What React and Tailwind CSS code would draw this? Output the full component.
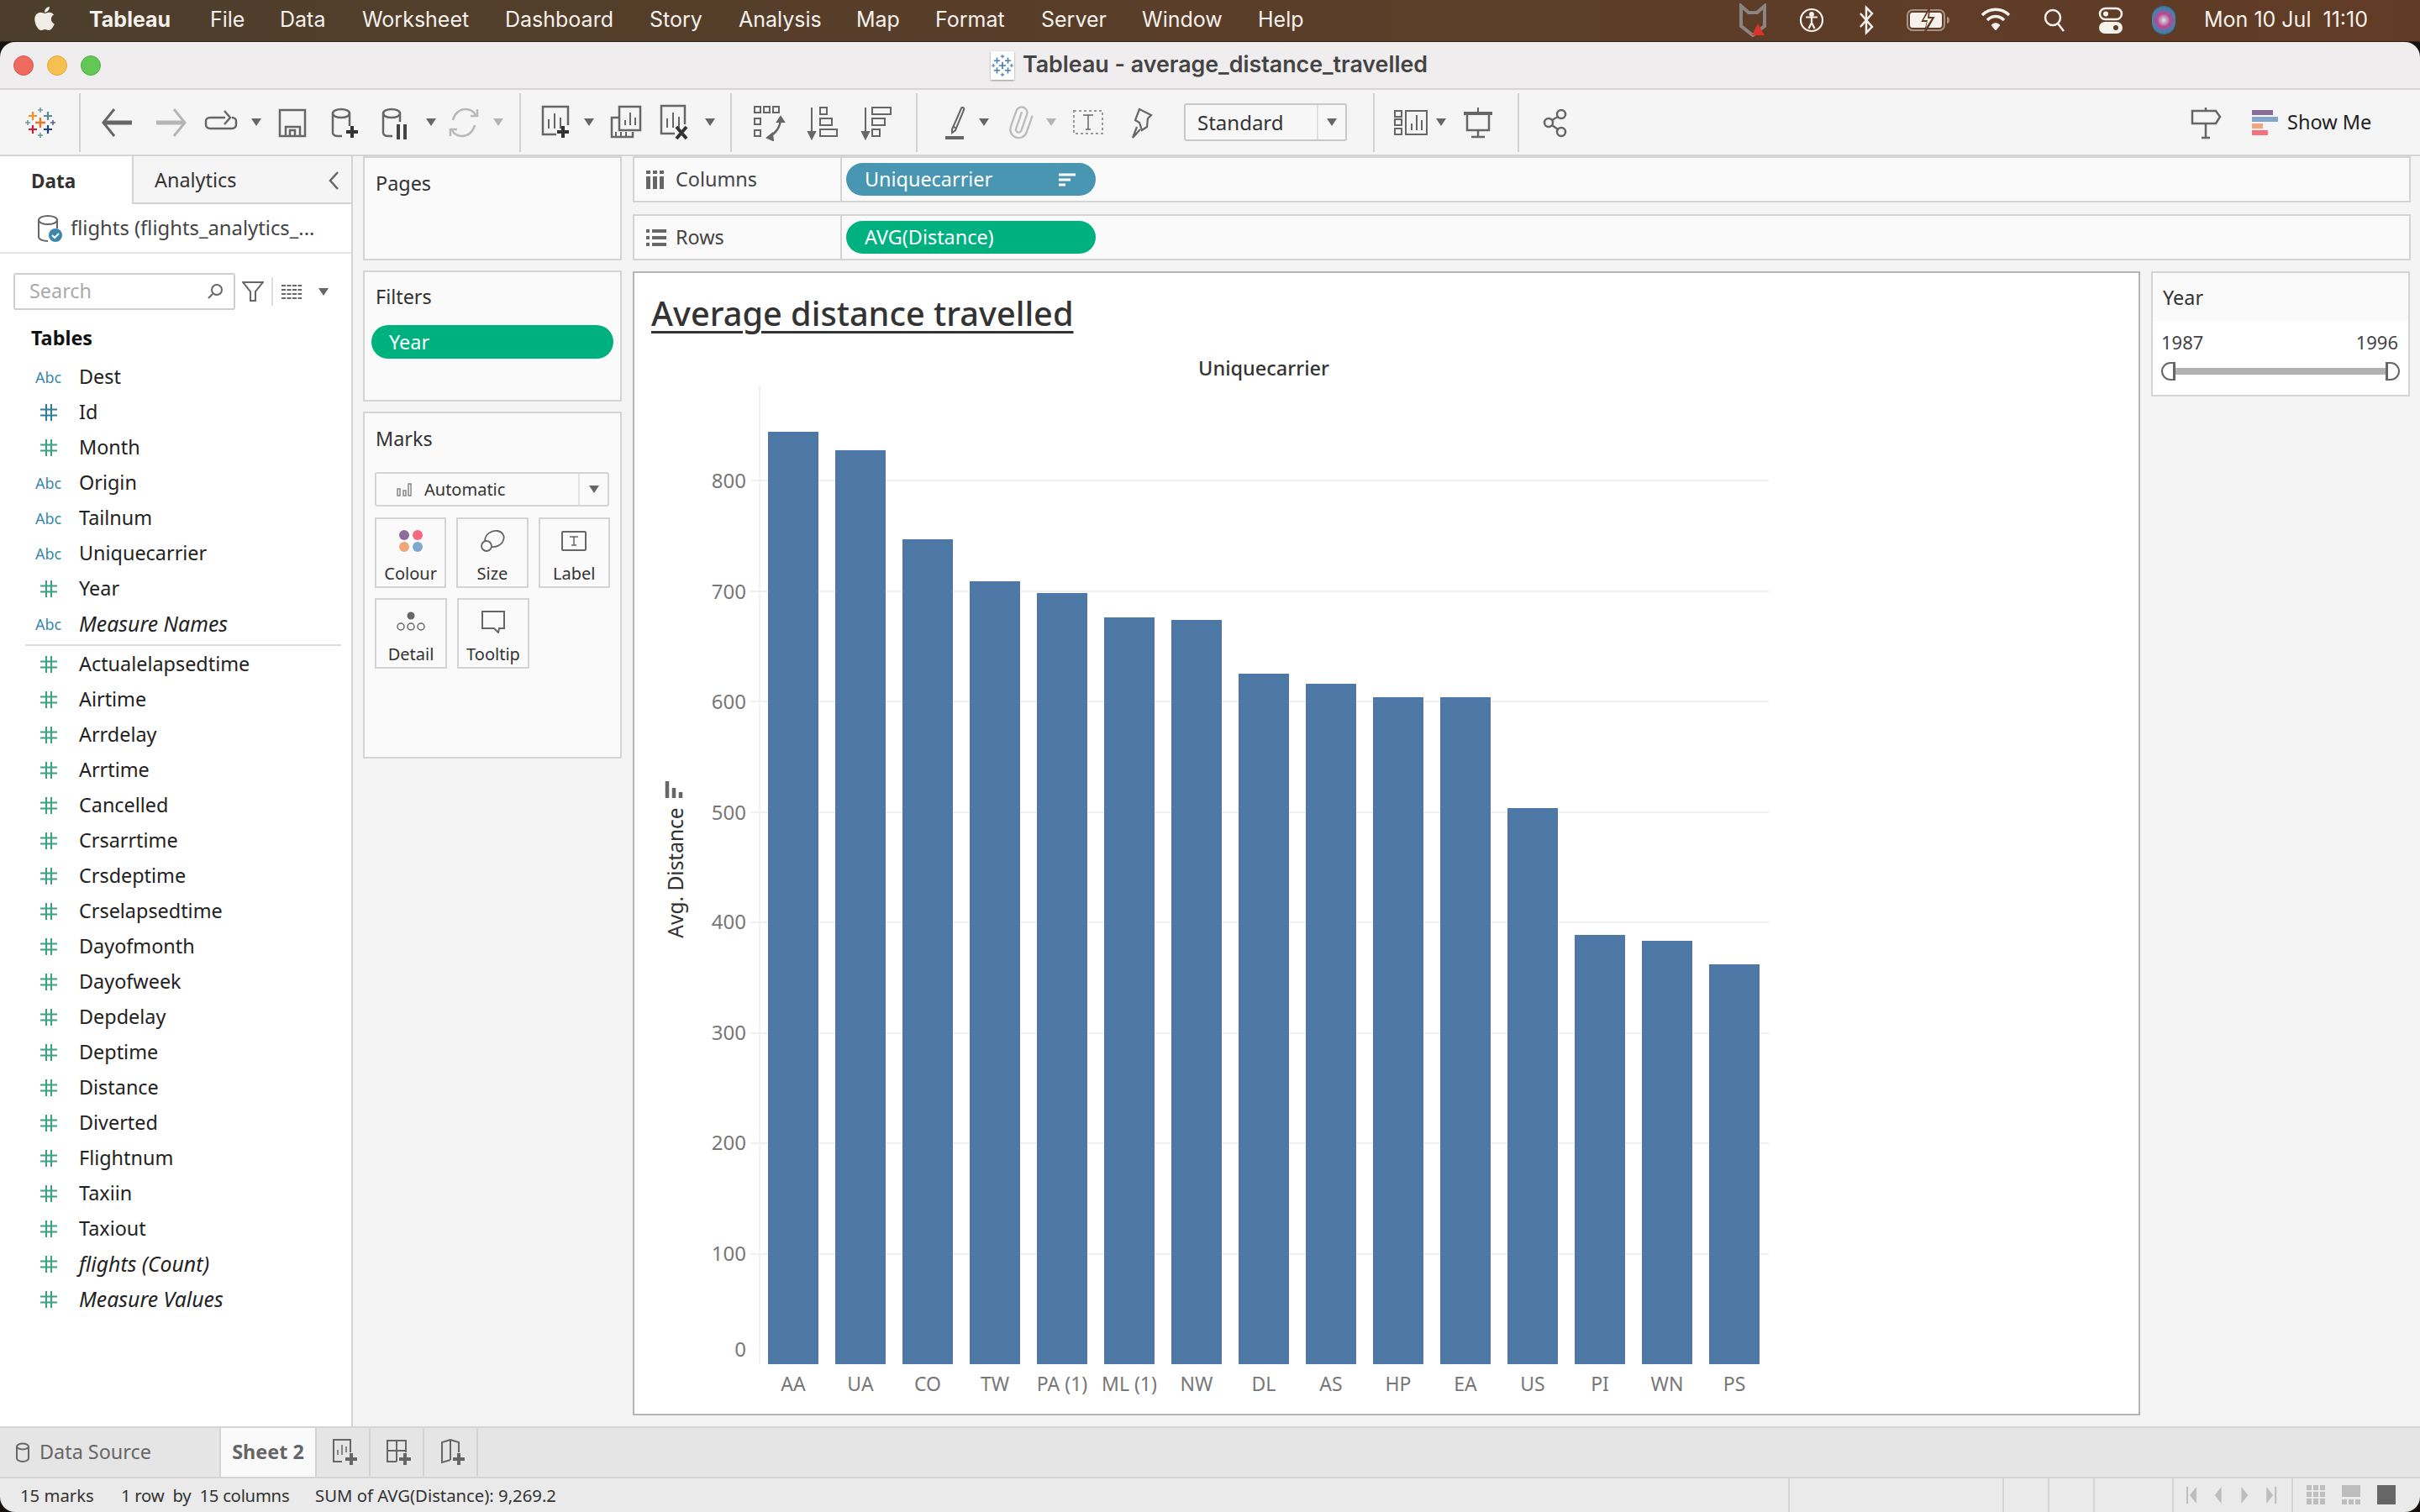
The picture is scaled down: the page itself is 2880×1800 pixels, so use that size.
import { Paperclip } from 'lucide-react';
import { FaApple } from 'react-icons/fa';

const font = 'font-["Noto_Sans",sans-serif]';

const tablesA = [
  ['abc', 'Dest'], ['idn', 'Id'], ['num', 'Month'], ['abc', 'Origin'], ['abc', 'Tailnum'],
  ['abc', 'Uniquecarrier'], ['num', 'Year'], ['abc', 'Measure Names', true],
];
const tablesB = [
  'Actualelapsedtime', 'Airtime', 'Arrdelay', 'Arrtime', 'Cancelled', 'Crsarrtime', 'Crsdeptime',
  'Crselapsedtime', 'Dayofmonth', 'Dayofweek', 'Depdelay', 'Deptime', 'Distance', 'Diverted',
  'Flightnum', 'Taxiin', 'Taxiout',
];

const bars = [
  ['AA', 514], ['UA', 536], ['CO', 642], ['TW', 692], ['PA (1)', 706], ['ML (1)', 735], ['NW', 738],
  ['DL', 802], ['AS', 814], ['HP', 830], ['EA', 830], ['US', 962], ['PI', 1113], ['WN', 1120], ['PS', 1148],
];
const ticks = [[800, 572, 573], [700, 704, 705], [600, 835, 836], [500, 967, 968], [400, 1098, 1098], [300, 1230, 1230], [200, 1361, 1361], [100, 1493, 1493], [0, 1624, 1607]];

function Ico({ w = 40, children, stroke = '#666', sw = 2.5, className = '' }) {
  return (
    <svg width={w} height="44" viewBox={`0 0 ${w} 44`} fill="none" stroke={stroke} strokeWidth={sw} className={`shrink-0 ${className}`}>
      {children}
    </svg>
  );
}

function Caret({ className = '', light }) {
  return <div className={`w-[12px] h-0 border-x-[6px] border-x-transparent border-t-[9px] shrink-0 ${light ? 'border-t-[#b5b5b5]' : 'border-t-[#666]'} ${className}`} />;
}

function Sep({ className = '' }) {
  return <div className={`w-[2px] h-[70px] bg-[#d2d2d2] shrink-0 ${className}`} />;
}

function Plus({ x, y, s = 7, color = '#333' }) {
  return <path d={`M${x} ${y - s}v${s * 2}M${x - s} ${y}h${s * 2}`} stroke={color} strokeWidth="4" />;
}

function Hash({ color }) {
  return (
    <svg width="20" height="20" viewBox="0 0 20 20" stroke={color} strokeWidth="2">
      <path d="M7 0v20M13 0v20M0 6.500h20M0 13.500h20" />
    </svg>
  );
}

function TableauLogo({ size = 36, mono }) {
  const c = (x) => (mono ? '#4e7fae' : x);
  const cross = (x, y, s, col, sw) => <path d={`M${x} ${y - s}v${s * 2}M${x - s} ${y}h${s * 2}`} stroke={c(col)} strokeWidth={sw} />;
  return (
    <svg width={size} height={size} viewBox="0 0 36 36" fill="none">
      {cross(18, 18, 6, '#e8762b', 2.4)}
      {cross(9, 10, 5, '#f28e2b', 2.2)}
      {cross(27, 10, 5, '#5b879b', 2.2)}
      {cross(9, 26, 5, '#c72035', 2.2)}
      {cross(27, 26, 5, '#1f447e', 2.2)}
      {cross(18, 3, 3, '#7099a6', 1.6)}
      {cross(18, 33, 3, '#7099a6', 1.6)}
      {cross(3, 18, 3, '#7099a6', 1.6)}
      {cross(33, 18, 3, '#5b6591', 1.6)}
    </svg>
  );
}

function MenuBar() {
  const items = [
    ['File', 'w-[83px]'], ['Data', 'w-[98px]'], ['Worksheet', 'w-[170px]'], ['Dashboard', 'w-[172px]'],
    ['Story', 'w-[106px]'], ['Analysis', 'w-[140px]'], ['Map', 'w-[94px]'], ['Format', 'w-[126px]'],
    ['Server', 'w-[120px]'], ['Window', 'w-[138px]'], ['Help', 'w-[60px]'],
  ];
  return (
    <div className='h-[50px] shrink-0 flex items-center border-b border-[#2a2018] bg-gradient-to-r from-[#4d3e2c] via-[#5a3e29] to-[#613b26] text-[#f5f1ec] font-["Inter",sans-serif] text-[25px] pb-[2px]'>
      <FaApple className="ml-[38px] w-[30px] h-[32px] text-[#f0ece6] -mt-[4px]" />
      <span className="ml-[38px] w-[144px] font-bold">Tableau</span>
      {items.map(([t, w]) => (
        <span key={t} className={w}>{t}</span>
      ))}
      <div className="ml-auto flex items-center">
        {/* shield */}
        <svg width="34" height="40" viewBox="0 0 34 40">
          <path d="M3 3l9 8h10l9-8v24l-14 11-14-11z" fill="none" stroke="#8a8580" strokeWidth="4" />
          <path d="M23 24l8 14h-15z" fill="#d9352c" />
        </svg>
        <svg className="ml-[38px]" width="30" height="32" viewBox="0 0 30 32" fill="none" stroke="#f5f1ec" strokeWidth="2.2">
          <circle cx="15" cy="16" r="13" />
          <circle cx="15" cy="9" r="1.800" fill="#f5f1ec" />
          <path d="M8 12.500h14M15 13v6M15 19l-3.500 7M15 19l3.500 7" />
        </svg>
        <svg className="ml-[40px]" width="20" height="36" viewBox="0 0 20 36" fill="none" stroke="#f5f1ec" strokeWidth="2.500">
          <path d="M3 10l14 16-7 7V3l7 7L3 26" />
        </svg>
        <svg className="ml-[38px]" width="52" height="28" viewBox="0 0 52 28">
          <rect x="1" y="2" width="44" height="24" rx="6" fill="none" stroke="#a79383" strokeWidth="2" />
          <rect x="4" y="5" width="38" height="18" rx="3" fill="#f5f1ec" />
          <path d="M48 10v8c2 0 3-2 3-4s-1-4-3-4z" fill="#a79383" />
          <path d="M27 0l-8 15h6l-3 13 10-17h-6z" fill="#613b26" stroke="#613b26" strokeWidth="2" />
          <path d="M26 4l-6 10h5l-2 9 7-11h-5z" fill="#f5f1ec" />
        </svg>
        <svg className="ml-[36px]" width="36" height="32" viewBox="0 0 36 32" fill="none" stroke="#f5f1ec" strokeWidth="3.500">
          <path d="M2 10c9-9 23-9 32 0M8 16c6-6 14-6 20 0" />
          <path d="M18 28l-5-6c3-3 7-3 10 0z" fill="#f5f1ec" strokeWidth="1" />
        </svg>
        <svg className="ml-[39px]" width="26" height="30" viewBox="0 0 26 30" fill="none" stroke="#f5f1ec" strokeWidth="2.500">
          <circle cx="11" cy="12" r="9" />
          <path d="M17 19l7 9" />
        </svg>
        <svg className="ml-[39px]" width="30" height="32" viewBox="0 0 30 32">
          <rect x="2" y="2" width="26" height="13" rx="6.500" fill="none" stroke="#f5f1ec" strokeWidth="2.500" />
          <circle cx="9" cy="8.500" r="3" fill="#f5f1ec" />
          <rect x="1" y="18" width="28" height="14" rx="7" fill="#f5f1ec" />
          <circle cx="21" cy="25" r="3" fill="#613b26" />
        </svg>
        <div className="ml-[34px] w-[28px] h-[34px] rounded-full bg-[radial-gradient(circle,#c8d8e0_5%,#c0468f_35%,#3a86b0_65%,#3c3a55_100%)]" />
        <span className="ml-[34px] mr-[38px] w-[219px] whitespace-pre">Mon 10 Jul  11:10</span>
      </div>
    </div>
  );
}

function TitleBar() {
  return (
    <div className="h-[57px] shrink-0 flex items-center bg-[#efedee] border-b-2 border-[#d4d4d4] relative">
      <div className="flex gap-[16px] ml-[16px]">
        <div className="w-[24px] h-[24px] rounded-full bg-[#ef6a5f] border border-[#d95b50]" />
        <div className="w-[24px] h-[24px] rounded-full bg-[#f6bf50] border border-[#dfa73f]" />
        <div className="w-[24px] h-[24px] rounded-full bg-[#62c755] border border-[#53ad47]" />
      </div>
      <div className="absolute left-[1179px] top-[8px] flex items-center">
        <div className="w-[28px] h-[34px] mt-[2px] bg-white shadow-[0_1px_2px_rgba(0,0,0,0.4)] flex items-center justify-center">
          <TableauLogo size={26} mono />
        </div>
        <span className='ml-[10px] -mt-[2px] font-["Inter",sans-serif] font-semibold text-[26.800px] text-[#444] whitespace-nowrap'>Tableau - average_distance_travelled</span>
      </div>
    </div>
  );
}

function Toolbar() {
  return (
    <div className="h-[79px] shrink-0 flex items-center bg-[#f5f5f5] border-b-2 border-[#d4d4d4]">
      <div className="ml-[30px] shrink-0"><TableauLogo /></div>
      <Sep className="ml-[28px]" />
      <Ico className="ml-[23px]" sw={3}><path d="M17 6L4 22l13 16" /><path d="M4 22h34" strokeWidth="5" /></Ico>
      <Ico className="ml-[25px]" stroke="#b5b5b5" sw={3}><path d="M23 6l13 16-13 16" /><path d="M36 22H2" strokeWidth="5" /></Ico>
      <Ico w={44} className="ml-[17px]">
        <path d="M27 16H9c-3 0-5 2-5 4v4c0 3 2 5 5 5h26c3 0 5-2 5-5v-4c0-2-2-4-5-4" />
        <path d="M26 8l7 8-7 8" />
      </Ico>
      <Caret className="ml-[14px]" />
      <Ico className="ml-[17px]" sw={2.500}>
        <rect x="5" y="7" width="30" height="31" />
        <path d="M12 38V27h17v11M17 38v-7h6v7" />
      </Ico>
      <Ico className="ml-[23px]">
        <ellipse cx="15" cy="11" rx="10" ry="5" />
        <path d="M5 11v23c0 2 2 4 6 4h5M25 11v15" />
        <Plus x={28} y={33} />
      </Ico>
      <Ico className="ml-[20px]">
        <ellipse cx="15" cy="11" rx="10" ry="5" />
        <path d="M5 11v23c0 2 2 4 6 4h5M25 11v10" />
        <path d="M23 24v18M31 24v18" stroke="#444" strokeWidth="4" />
      </Ico>
      <Caret className="ml-[16px]" />
      <Ico className="ml-[13px]" stroke="#b8b8b8">
        <path d="M7 19c2-8 8-13 15-13 6 0 10 3 12 7M33 25c-2 8-8 13-15 13-6 0-10-3-12-7" />
        <path d="M28 14h8v-8M12 30H4v8" />
      </Ico>
      <Caret className="ml-[15px]" light />
      <Sep className="ml-[19px]" />
      <Ico className="ml-[20px]">
        <path d="M22 36H6V3h30v22" />
        <path d="M13 29V18M20 29V11M27 29V16" strokeWidth="2" />
        <Plus x={30} y={33} />
      </Ico>
      <Caret className="ml-[15px]" />
      <Ico className="ml-[18px]">
        <path d="M12 16H3v23h25v-6" />
        <rect x="12" y="3" width="25" height="28" fill="#f5f5f5" />
        <path d="M19 25v-6M25 25V10M31 25v-9M8 33v6M14 33v6M20 33v6" strokeWidth="2" />
      </Ico>
      <Ico className="ml-[18px]">
        <path d="M20 35H4V2h28v22" />
        <path d="M11 28V17M18 28V10M25 28V15" strokeWidth="2" />
        <path d="M22 27l12 14M34 27L22 41" stroke="#333" strokeWidth="4" />
      </Ico>
      <Caret className="ml-[16px]" />
      <Sep className="ml-[18px]" />
      <Ico className="ml-[24px]" sw={2}>
        <rect x="3" y="3" width="7" height="7" /><rect x="14" y="3" width="7" height="7" /><rect x="25" y="3" width="7" height="7" />
        <rect x="3" y="17" width="7" height="7" /><rect x="3" y="31" width="7" height="7" />
        <path d="M34 17c0 10-6 18-14 22" strokeWidth="2.500" />
        <path d="M30 21l4-6 4 6z" fill="#666" /><path d="M24 35l-6 5 7 3z" fill="#666" />
      </Ico>
      <Ico className="ml-[24px]" sw={2}>
        <path d="M7 4v32" /><path d="M3 33l4 8 4-8z" fill="#666" />
        <rect x="17" y="4" width="8" height="8" /><rect x="17" y="17" width="14" height="8" /><rect x="17" y="30" width="20" height="8" />
      </Ico>
      <Ico className="ml-[24px]" sw={2}>
        <path d="M7 4v32" /><path d="M3 33l4 8 4-8z" fill="#666" />
        <rect x="15" y="4" width="22" height="8" /><rect x="15" y="17" width="15" height="8" /><rect x="15" y="30" width="9" height="8" />
      </Ico>
      <Sep className="ml-[27px]" />
      <Ico className="ml-[23px]" sw={2}>
        <path d="M18 30l11-25c1-2 4-1 3 2L22 31l-4 3z" />
        <path d="M19 26l4 3" />
        <path d="M10 40h22" strokeWidth="4" />
      </Ico>
      <Caret className="ml-[10px]" />
      <div className="ml-[17px] w-[40px] h-[44px] flex items-center justify-center shrink-0">
        <Paperclip size={40} color="#bbb" strokeWidth={1.400} className="-rotate-[25deg]" />
      </div>
      <Caret className="ml-[11px]" light />
      <Ico className="ml-[18px]" sw={1.500}>
        <rect x="3" y="8" width="34" height="27" stroke="#999" strokeWidth="2" strokeDasharray="3 3" />
        <path d="M14 13h12M20 13v17M17 30h6" />
      </Ico>
      <Ico className="ml-[24px]" sw={2.200}>
        <path d="M17 6l14 7-4 4-1 10-6 4-3-9-5-3zM14 27L9 40l9-10" />
      </Ico>
      <div className={`ml-[30px] w-[194px] h-[45px] shrink-0 flex items-center border-2 border-[#c8c8c8] rounded-[3px] bg-[#f7f7f7] ${font} text-[24px] text-[#333]`}>
        <span className="pl-[14px] w-[156px]">Standard</span>
        <div className="h-full border-l-2 border-[#e0e0e0] flex-1 flex items-center justify-center"><Caret /></div>
      </div>
      <Sep className="ml-[31px]" />
      <Ico className="ml-[23px]" sw={2}>
        <rect x="1" y="8" width="8" height="7" /><rect x="1" y="18" width="8" height="7" /><rect x="1" y="29" width="8" height="7" />
        <rect x="14" y="8" width="25" height="28" />
        <path d="M21 31V23M27 31V13M33 31V19" />
      </Ico>
      <Caret className="ml-[10px]" />
      <Ico className="ml-[18px]" sw={2.500}>
        <path d="M20 4v6" strokeWidth="2" />
        <path d="M3 11h34" strokeWidth="4" />
        <path d="M7 12v19h26V12M20 31v8M12 39h16" />
      </Ico>
      <Sep className="ml-[27px]" />
      <Ico className="ml-[23px]" sw={2.500}>
        <circle cx="27" cy="12" r="5" /><circle cx="27" cy="33" r="5" /><circle cx="12" cy="22" r="5" />
        <path d="M16 19l7-4M16 25l7 5" />
      </Ico>
      <Ico className="ml-auto" sw={2.500}>
        <path d="M20 4v4M20 23v17M15 40h10" />
        <path d="M4 8h28l5 7-5 8H4z" />
      </Ico>
      <div className="ml-[35px] w-[31px] shrink-0 flex flex-col gap-[2px]">
        <div className="w-[25px] h-[6px] bg-[#8a6d9c]" />
        <div className="w-[31px] h-[6px] bg-[#82a6cd]" />
        <div className="w-[13px] h-[6px] bg-[#f2a67c]" />
        <div className="w-[19px] h-[6px] bg-[#f7707f]" />
      </div>
      <span className={`ml-[11px] mr-[58px] w-[100px] ${font} text-[23.500px] text-[#222] whitespace-nowrap`}>Show Me</span>
    </div>
  );
}

function Field({ type, name, italic }) {
  return (
    <div className="h-[42px] flex items-center">
      <div className="w-[94px] shrink-0">
        {type === 'abc' && <span className="pl-[42px] text-[18px] text-[#3a88ab]">Abc</span>}
        {type === 'num' && <div className="pl-[48px]"><Hash color="#3ba27e" /></div>}
        {type === 'idn' && <div className="pl-[48px]"><Hash color="#2f7d9e" /></div>}
      </div>
      <span className={`text-[#222] ${italic ? 'italic text-[24.800px]' : 'text-[23.400px]'}`}>{name}</span>
    </div>
  );
}

function Sidebar() {
  return (
    <div className={`w-[420px] shrink-0 bg-white border-r-2 border-[#d4d4d4] flex flex-col ${font}`}>
      <div className="h-[57px] flex shrink-0">
        <div className="w-[157px] pl-[37px] pt-[2px] text-[22.500px] font-bold text-[#333] flex items-center">Data</div>
        <div className="flex-1 flex items-center pl-[25px] pt-[2px] bg-[#f5f5f5] border-l-2 border-b-2 border-[#d4d4d4] text-[23.400px] text-[#333]">
          Analytics
          <svg className="ml-auto mr-[14px]" width="14" height="24" viewBox="0 0 14 24" fill="none" stroke="#666" strokeWidth="2.500"><path d="M12 2L3 12l9 10" /></svg>
        </div>
      </div>
      <div className="h-[59px] flex items-center border-b-2 border-[#e3e3e3] shrink-0">
        <svg className="ml-[44px]" width="30" height="34" viewBox="0 0 30 34" fill="none" stroke="#666" strokeWidth="2">
          <ellipse cx="13" cy="7" rx="11" ry="5" />
          <path d="M2 7v20c0 3 5 5 11 5M24 7v10" />
          <circle cx="22" cy="25" r="8" fill="#3a88ab" stroke="none" />
          <path d="M18 25l3 3 5-5" stroke="#fff" />
        </svg>
        <span className="ml-[10px] text-[23.800px] text-[#444] whitespace-nowrap">flights (flights_analytics_...</span>
      </div>
      <div className="flex items-center mt-[23px] ml-[16px] shrink-0">
        <div className="w-[264px] h-[44px] border-2 border-[#cfcfcf] rounded-[3px] flex items-center pl-[17px] text-[23.400px] text-[#aaa]">
          Search
          <svg className="ml-auto mr-[12px]" width="20" height="20" viewBox="0 0 20 20" fill="none" stroke="#666" strokeWidth="2"><circle cx="12" cy="8" r="6" /><path d="M7 13l-5 5" /></svg>
        </div>
        <svg className="ml-[8px]" width="26" height="26" viewBox="0 0 26 26" fill="none" stroke="#666" strokeWidth="2"><path d="M1 2h24l-9 11v11h-6V13z" /></svg>
        <div className="ml-[9px] w-[2px] h-[34px] bg-[#ddd]" />
        <svg className="ml-[10px]" width="24" height="18" viewBox="0 0 24 18" stroke="#666" strokeWidth="2"><path d="M0 2h24M0 7h24M0 12h24M0 17h24" strokeDasharray="5 1.500" /></svg>
        <Caret className="ml-[20px]" />
      </div>
      <div className="mt-[16px] pl-[37px] text-[23.400px] font-bold text-[#111] leading-[34px]">Tables</div>
      <div className="mt-[9px]">
        {tablesA.map(([t, n, i]) => <Field key={n} type={t} name={n} italic={i} />)}
      </div>
      <div className="ml-[30px] mr-[12px] h-[2px] bg-[#ddd] mt-[3px]" />
      <div className="mt-[1px]">
        {tablesB.map((n) => <Field key={n} type="num" name={n} />)}
        <Field type="num" name="flights (Count)" italic />
        <Field type="num" name="Measure Values" italic />
      </div>
    </div>
  );
}

function Card({ label, children }) {
  return (
    <div className="w-[86px] h-[84px] border-2 border-[#d4d4d4] flex flex-col items-center">
      <div className="h-[28px] mt-[12px] flex items-center justify-center">{children}</div>
      <span className="mt-[13px] text-[20px] leading-[24px] text-[#333]">{label}</span>
    </div>
  );
}

function Panels() {
  return (
    <div className={`w-[308px] shrink-0 flex flex-col gap-[12px] ${font} text-[23.400px] text-[#333]`}>
      <div className="h-[124px] bg-[#fafafa] border-2 border-[#d4d4d4] pl-[13px] pt-[13px]">Pages</div>
      <div className="h-[156px] bg-[#fafafa] border-2 border-[#d4d4d4] px-[8px] pt-[12px]">
        <div className="pl-[5px]">Filters</div>
        <div className="mt-[16px] h-[40px] rounded-full bg-[#00b180] text-white flex items-center pl-[21px]">Year</div>
      </div>
      <div className="h-[413px] bg-[#fafafa] border-2 border-[#d4d4d4] px-[12px] pt-[13px]">
        <div className="pl-[1px]">Marks</div>
        <div className="mt-[22px] w-[279px] h-[41px] border-2 border-[#d4d4d4] rounded-[3px] flex items-center text-[20px]">
          <svg className="ml-[24px]" width="18" height="16" viewBox="0 0 18 16" fill="none" stroke="#888" strokeWidth="1.500"><rect x="1" y="7" width="3" height="8" /><rect x="8" y="9" width="3" height="6" /><rect x="14" y="1" width="3" height="14" /></svg>
          <span className="ml-[15px]">Automatic</span>
          <div className="ml-auto w-[35px] h-full border-l-2 border-[#e3e3e3] flex items-center justify-center"><Caret /></div>
        </div>
        <div className="mt-[13px] flex gap-[12px]">
          <Card label="Colour">
            <svg width="30" height="28" viewBox="0 0 30 28">
              <circle cx="7" cy="7" r="6" fill="#8a6d9c" /><circle cx="23" cy="7" r="6" fill="#f5687d" />
              <circle cx="7" cy="21" r="6" fill="#f0a678" /><circle cx="23" cy="21" r="6" fill="#7fa7d0" />
            </svg>
          </Card>
          <Card label="Size">
            <svg width="30" height="28" viewBox="0 0 30 28" fill="none" stroke="#666" strokeWidth="1.800">
              <path d="M6 14C6 6 14 1 21 2c6 1 9 6 7 11-2 6-9 9-15 8" />
              <circle cx="8" cy="20" r="6" />
            </svg>
          </Card>
          <Card label="Label">
            <svg width="30" height="28" viewBox="0 0 30 28" fill="none" stroke="#666" strokeWidth="2">
              <rect x="1" y="3" width="28" height="22" rx="1" />
              <path d="M10 9h10M15 9v10M12 19h6" strokeWidth="1.500" />
            </svg>
          </Card>
        </div>
        <div className="mt-[12px] flex gap-[12px]">
          <Card label="Detail">
            <svg width="34" height="26" viewBox="0 0 34 26" fill="none" stroke="#666" strokeWidth="1.500">
              <circle cx="17" cy="6" r="4.500" fill="#666" stroke="none" />
              <circle cx="5" cy="19" r="4" /><circle cx="17" cy="19" r="4" /><circle cx="29" cy="19" r="4" />
            </svg>
          </Card>
          <Card label="Tooltip">
            <svg width="30" height="28" viewBox="0 0 30 28" fill="none" stroke="#666" strokeWidth="2"><path d="M2 2h26v20h-6l-1 5-5-5H2z" /></svg>
          </Card>
        </div>
      </div>
    </div>
  );
}

function Shelf({ icon, label, pill, pillCls, sort }) {
  return (
    <div className={`h-[55px] bg-[#fafafa] border-2 border-[#d4d4d4] flex items-center ${font} text-[23.400px] text-[#444]`}>
      <div className="w-[247px] h-full flex items-center border-r-2 border-[#d4d4d4] pl-[14px]">
        <div className="w-[35px]">{icon}</div>
        {label}
      </div>
      <div className={`ml-[5px] w-[297px] h-[39px] rounded-full flex items-center pl-[22px] text-white ${pillCls}`}>
        {pill}
        {sort && (
          <svg className="ml-auto mr-[24px]" width="20" height="18" viewBox="0 0 20 18" stroke="#fff" strokeWidth="3"><path d="M0 3h20M0 9h14M0 15h8" /></svg>
        )}
      </div>
    </div>
  );
}

function Chart() {
  return (
    <svg width="1790" height="1263" viewBox="755 420 1790 1263" className="block" fontFamily="'Noto Sans',sans-serif">
      <text x="1504" y="447" textAnchor="middle" fontSize="23.500" fontWeight="500" fill="#333">Uniquecarrier</text>
      <path d="M904 458V1624" stroke="#f3f3f3" strokeWidth="2" />
      {ticks.slice(0, -1).map(([, y]) => (
        <path key={y} d={`M893 ${y}H2105`} stroke="#f0f0f0" strokeWidth="2" />
      ))}
      {bars.map(([l, top], i) => (
        <g key={l}>
          <rect x={914 + 80 * i} y={top} width="60" height={1624 - top} fill="#4e79a7" />
          <text x={944 + 80 * i} y="1656" textAnchor="middle" fontSize="23" fill="#777">{l}</text>
        </g>
      ))}
      {ticks.map(([v, , ly]) => (
        <text key={v} x="888" y={ly + 8} textAnchor="end" fontSize="24" fill="#777">{v}</text>
      ))}
      <text transform="translate(813 1039) rotate(-90)" textAnchor="middle" fontSize="24.500" fill="#333">Avg. Distance</text>
      <path d="M794 950v-20M802 950v-12M810 950v-7" stroke="#666" strokeWidth="4.500" />
    </svg>
  );
}

function YearCard() {
  return (
    <div className={`w-[308px] h-[149px] bg-white border-2 border-[#d4d4d4] shrink-0 ${font}`}>
      <div className="h-[57px] bg-[#fafafa] flex items-center pl-[12px] pt-[2px] text-[23.400px] text-[#333]">Year</div>
      <div className="flex justify-between pl-[10px] pr-[12px] mt-[10px] text-[22px] leading-[30px] text-[#444]">
        <span>1987</span><span>1996</span>
      </div>
      <div className="mx-[10px] mt-[9px] h-[22px] flex items-center">
        <div className="w-[17px] h-[22px] border-2 border-r-[3px] border-[#666] rounded-l-full bg-white" />
        <div className="flex-1 h-[8px] bg-[#b2b2b2]" />
        <div className="w-[17px] h-[22px] border-2 border-l-[3px] border-[#666] rounded-r-full bg-white" />
      </div>
    </div>
  );
}

function Workspace() {
  return (
    <div className="flex-1 min-w-0 flex flex-col">
      <div className="flex flex-col gap-[14px]">
        <Shelf
          label="Columns"
          pill="Uniquecarrier"
          pillCls="bg-[#4996b2]"
          sort
          icon={<svg width="22" height="22" viewBox="0 0 22 22" fill="#666"><path d="M0 7h5v15H0zM8 7h5v15H8zM16 7h5v15h-5zM0 0h5v4H0zM8 0h5v4H8zM16 0h5v4h-5z" /></svg>}
        />
        <Shelf
          label="Rows"
          pill="AVG(Distance)"
          pillCls="bg-[#00b180]"
          icon={<svg width="24" height="20" viewBox="0 0 24 20" fill="#666"><path d="M0 0h4v4H0zM7 0h17v4H7zM0 8h4v4H0zM7 8h17v4H7zM0 16h4v4H0zM7 16h17v4H7z" /></svg>}
        />
      </div>
      <div className="mt-[13px] flex gap-[13px] flex-1 min-h-0">
        <div className={`w-[1794px] h-[1362px] bg-white border-2 border-[#b4b4b4] shrink-0 ${font}`}>
          <div className="h-[95px] pl-[20px] pt-[23px]">
            <span className="text-[39.700px] leading-[50px] font-medium text-[#333] underline decoration-[3px] underline-offset-[6px] whitespace-nowrap">Average distance travelled</span>
          </div>
          <Chart />
        </div>
        <YearCard />
      </div>
    </div>
  );
}

function SheetTabs() {
  const tabIcon = (extra) => (
    <div className="w-[64px] h-full flex items-center justify-center pl-[5px] border-r-2 border-[#d4d4d4] shrink-0">
      <svg width="34" height="34" viewBox="0 0 34 34" fill="none" stroke="#666" strokeWidth="2">
        {extra}
        <Plus x={24} y={25} s={7} color="#666" />
      </svg>
    </div>
  );
  return (
    <div className={`h-[60px] shrink-0 bg-[#e5e5e5] border-t-2 border-[#d4d4d4] flex ${font}`}>
      <div className="w-[261px] flex items-center pl-[18px] text-[23.400px] text-[#666] shrink-0">
        <svg width="18" height="24" viewBox="0 0 18 24" fill="none" stroke="#666" strokeWidth="2"><ellipse cx="9" cy="5" rx="7" ry="3.500" /><path d="M2 5v14c0 2 3 4 7 4s7-2 7-4V5" /></svg>
        <span className="ml-[11px]">Data Source</span>
      </div>
      <div className="w-[116px] bg-[#fafafa] border-x-2 border-[#d4d4d4] flex items-center justify-center text-[23.400px] font-bold text-[#666] shrink-0">Sheet 2</div>
      {tabIcon(<><path d="M13 28H3V2h20v15" /><path d="M8 20v-6M13 20V8M18 17v-7" strokeWidth="1.500" /></>)}
      {tabIcon(<><path d="M14 28H3V3h22v14M14 3v25M3 15h22" /></>)}
      {tabIcon(<><path d="M14 26L4 29V5l10-3 10 3v12M14 2v24" /></>)}
    </div>
  );
}

function StatusBar() {
  const cell = 'h-full border-l-2 border-[#d4d4d4] shrink-0';
  return (
    <div className={`h-[42px] shrink-0 bg-[#eaeaea] border-t-2 border-[#d4d4d4] flex items-center rounded-b-[18px] overflow-hidden ${font} text-[20.300px] text-[#333]`}>
      <div className="flex-1 flex pl-[24px] whitespace-pre">
        <span className="w-[120px]">15 marks</span>
        <span className="w-[231px] tracking-[-0.250px]">1 row  by  15 columns</span>
        <span>SUM of AVG(Distance): 9,269.2</span>
      </div>
      <div className={`${cell} w-[255px]`} />
      <div className={`${cell} w-[54px]`} />
      <div className={`${cell} w-[54px]`} />
      <div className={`${cell} w-[94px]`} />
      <div className={`${cell} w-[142px] flex items-center`}>
        <svg className="ml-[15px]" width="126" height="24" viewBox="0 0 126 24" fill="#bdbdbd">
          <path d="M0 2h2v20H0zM4 12l8-10v20zM34 12l8-10v20zM66 2l8 10-8 10zM96 2l8 10-8 10zM106 2h2v20h-2z" />
        </svg>
      </div>
      <div className={`${cell} w-[153px] flex items-center`}>
        <svg className="ml-[16px]" width="124" height="24" viewBox="0 0 124 24">
          <g fill="#bdbdbd">
            <path d="M0 0h6v6H0zM8 0h6v6H8zM16 0h6v6h-6zM0 8h6v6H0zM8 8h6v6H8zM16 8h6v6h-6zM0 16h6v7H0zM8 16h6v7H8zM16 16h6v7h-6z" />
            <path d="M42 0h22v14H42zM42 17h6v6h-6zM50 17h6v6h-6zM58 17h6v6h-6z" />
          </g>
          <rect x="84" y="0" width="22" height="23" fill="#666" />
        </svg>
      </div>
    </div>
  );
}

export default function App() {
  return (
    <div className="w-[2880px] h-[1800px] overflow-hidden bg-[#15110e] flex flex-col">
      <MenuBar />
      <div className="flex-1 min-h-0 flex flex-col rounded-t-[18px] overflow-hidden">
        <TitleBar />
        <Toolbar />
        <div className="flex-1 min-h-0 flex bg-[#f4f4f4]">
          <Sidebar />
          <div className="flex-1 min-w-0 flex gap-[13px] pl-[12px] pr-[11px]">
            <Panels />
            <Workspace />
          </div>
        </div>
        <SheetTabs />
        <StatusBar />
      </div>
    </div>
  );
}
